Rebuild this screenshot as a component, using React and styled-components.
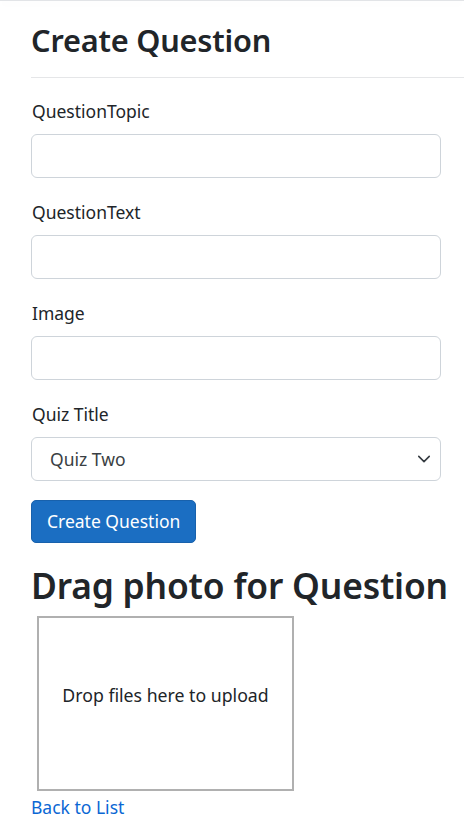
import React from "react";
import styled, { createGlobalStyle } from "styled-components";

const GlobalStyle = createGlobalStyle`
  html, body {
    margin: 0;
    padding: 0;
    background: #fff;
  }
  body {
    font-family: "Noto Sans", "Open Sans", sans-serif;
    color: #212529;
    font-size: 17.5px;
  }
  * { box-sizing: border-box; }
`;

const TopShadow = styled.div`
  height: 1px;
  background: #e2e4e7;
  box-shadow: 0 2px 10px rgba(0, 0, 0, 0.07);
`;

const Main = styled.main`
  padding: 0 23px 0 31px;
`;

const Title = styled.h2`
  margin: 21px 0 0;
  font-size: ${(p) => p.size || 30.7}px;
  font-weight: 600;
  line-height: 1.2;
  color: #212529;
  letter-spacing: -0.2px;
  white-space: nowrap;
`;

const Rule = styled.hr`
  margin: 18px -23px 20px 0;
  border: 0;
  border-top: 1px solid #e5e6e8;
`;

const Group = styled.div`
  margin-bottom: 21px;

  &:last-of-type {
    margin-bottom: 19px;
  }
`;

const Label = styled.label`
  display: block;
  font-size: 17.5px;
  line-height: 26px;
  margin-bottom: 10px;
  padding-left: 1px;
`;

const Input = styled.input`
  display: block;
  width: 100%;
  height: 44px;
  padding: 6px 14px;
  font: inherit;
  color: #212529;
  border: 1px solid #ced4da;
  border-radius: 6px;
  background: #fff;
  outline: none;
`;

const SelectWrap = styled.div`
  position: relative;
`;

const Select = styled.select`
  display: block;
  width: 100%;
  height: 44px;
  padding: 6px 40px 6px 18px;
  font: inherit;
  font-size: 17.5px;
  color: #3a3f44;
  border: 1px solid #ced4da;
  border-radius: 6px;
  background: #fff;
  appearance: none;
  outline: none;
`;

const Chevron = styled.svg`
  position: absolute;
  right: 10px;
  top: 15px;
  pointer-events: none;
`;

const SubmitButton = styled.button`
  display: inline-block;
  height: 43px;
  padding: 0 15px;
  font: inherit;
  font-size: 17.5px;
  color: #fff;
  background: #1b6ec2;
  border: 1px solid #1861ac;
  border-radius: 5px;
  cursor: pointer;
`;

const DropTitle = styled(Title)`
  margin: 21px 0 10px;
`;

const DropZone = styled.div`
  width: 257px;
  height: 175px;
  margin-left: 6px;
  padding-top: 64px;
  border: 2px solid #b0b0b0;
  text-align: center;
  font-size: 17.7px;
  line-height: 26px;
  color: #212529;
`;

const BackLink = styled.a`
  display: inline-block;
  margin-top: 4px;
  font-size: 17.5px;
  line-height: 24px;
  color: #0b67d4;
  text-decoration: none;
`;

const fields = ["QuestionTopic", "QuestionText", "Image"];

export default function App() {
  return (
    <>
      <GlobalStyle />
      <TopShadow />
      <Main>
        <Title>Create Question</Title>
        <Rule />
        <form onSubmit={(e) => e.preventDefault()}>
          {fields.map((f) => (
            <Group key={f}>
              <Label htmlFor={f}>{f}</Label>
              <Input id={f} type="text" />
            </Group>
          ))}
          <Group>
            <Label htmlFor="quiz">Quiz Title</Label>
            <SelectWrap>
              <Select id="quiz" defaultValue="2">
                <option value="1">Quiz One</option>
                <option value="2">Quiz Two</option>
              </Select>
              <Chevron width="14" height="14" viewBox="0 0 16 16">
                <path d="M2 5l6 6 6-6" fill="none" stroke="#343a40" strokeWidth="1.8" strokeLinecap="round" strokeLinejoin="round" />
              </Chevron>
            </SelectWrap>
          </Group>
          <SubmitButton type="submit">Create Question</SubmitButton>
        </form>
        <DropTitle size={35.4}>Drag photo for Question</DropTitle>
        <DropZone>Drop files here to upload</DropZone>
        <BackLink href="#">Back to List</BackLink>
      </Main>
    </>
  );
}
